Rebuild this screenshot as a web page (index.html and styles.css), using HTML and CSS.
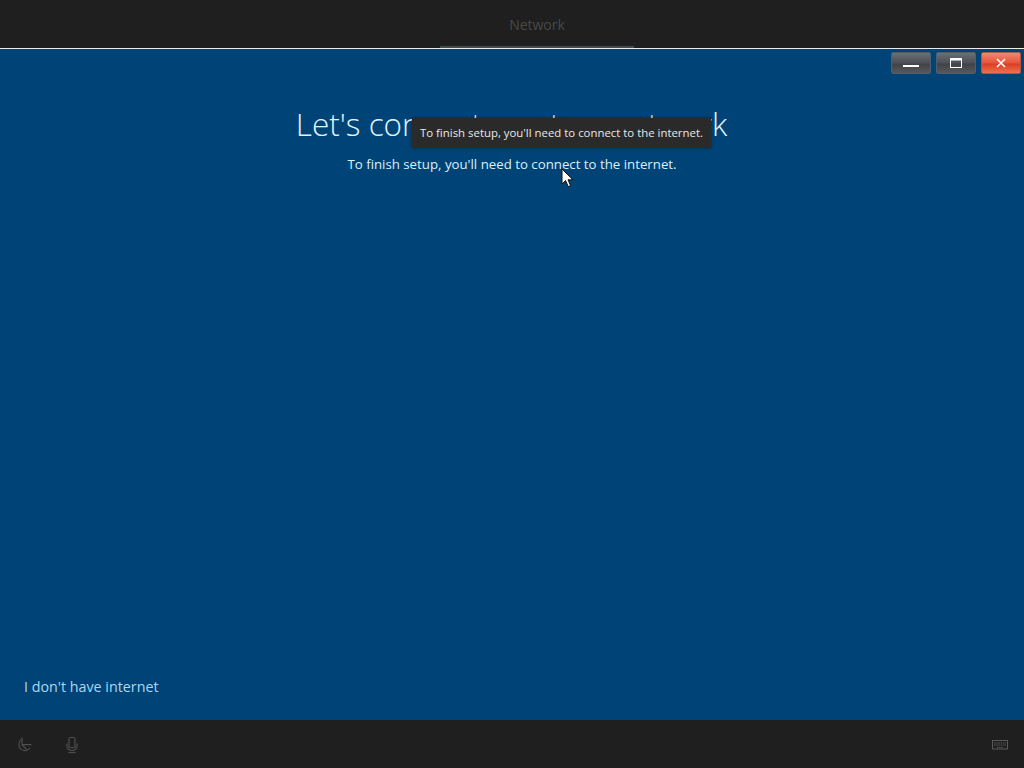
FILE: index.html
```html
<!DOCTYPE html>
<html lang="en">
<head>
<meta charset="utf-8">
<title>Network</title>
<link rel="stylesheet" href="styles.css">
</head>
<body>
<header class="topbar">
  <div class="step">
    <span class="step-label">Network</span>
    <span class="step-rule"></span>
  </div>
</header>
<main class="main">
  <div class="winctrls">
    <button class="wbtn"><svg width="16" height="10" viewBox="0 0 16 10"><rect x="0" y="7" width="16" height="2" fill="#fff"/></svg></button>
    <button class="wbtn"><svg width="12" height="10" viewBox="0 0 12 10"><rect x="0.5" y="0.5" width="11" height="9" fill="none" stroke="#fff"/><rect x="0" y="0" width="12" height="2.5" fill="#fff"/></svg></button>
    <button class="wbtn wclose"><svg width="10" height="10" viewBox="0 0 10 10"><path d="M1 1L9 9M9 1L1 9" stroke="#fff" stroke-width="1.6" fill="none"/></svg></button>
  </div>
  <h1 class="title">Let's connect you to a network</h1>
  <p class="subtitle">To finish setup, you'll need to connect to the internet.</p>
  <a class="skip">I don't have internet</a>
  <div class="tooltip">To finish setup, you'll need to connect to the internet.</div>
  <svg class="cursor" width="13" height="20" viewBox="0 0 13 20"><path d="M1 1V16L4.6 12.6L7.2 18.6L9.6 17.6L7 11.8H12Z" fill="#fff" stroke="#111" stroke-width="1"/></svg>
</main>
<footer class="bottombar">
  <div class="foot-left">
    <svg class="ficon" width="18" height="18" viewBox="0 0 18 18" fill="none" stroke="#4e4e4e" stroke-width="1.2"><path d="M5 3.6A6.2 6.2 0 1 0 14 12"/><path d="M6 1.5V8.6H15.5"/><path d="M6 8.6L10.5 13.5"/></svg>
    <svg class="ficon" width="18" height="18" viewBox="0 0 18 18" fill="none" stroke="#4e4e4e" stroke-width="1.2"><rect x="6" y="1.5" width="6" height="10" rx="1.5"/><path d="M4 7.5V10A5 4.5 0 0 0 14 10V7.5"/><path d="M5.5 16.5H12.5"/></svg>
  </div>
  <svg class="ficon" width="16" height="12" viewBox="0 0 16 12" fill="none" stroke="#585858"><rect x="0.5" y="1.5" width="15" height="8.5"/><path d="M2 4H14M2 6H14M5 8.5H11" stroke-dasharray="1.5 .7"/></svg>
</footer>
</body>
</html>
```
FILE: styles.css
```css
html, body {
  margin: 0;
  height: 100%;
}
body {
  display: flex;
  flex-direction: column;
  height: 768px;
  overflow: hidden;
  background: #004376;
  font-family: "Open Sans", "Liberation Sans", sans-serif;
}
.topbar {
  height: 48px;
  flex: none;
  background: #1f1f1f;
  border-bottom: 1px solid #e4eef2;
  display: flex;
  justify-content: center;
  box-sizing: content-box;
}
.step {
  width: 194px;
  margin-left: 50px;
  display: flex;
  flex-direction: column;
  align-items: center;
  justify-content: space-between;
}
.step-label {
  margin-top: 15px;
  font-size: 14px;
  line-height: 20px;
  color: #484848;
}
.step-rule {
  width: 100%;
  height: 2px;
  background: #454c50;
}
.main {
  position: relative;
  flex: 1;
  display: flex;
  flex-direction: column;
  align-items: center;
  background: #004376;
}
.winctrls {
  position: absolute;
  top: 3px;
  right: 3px;
  display: flex;
  gap: 5px;
}
.wbtn {
  width: 40px;
  height: 22px;
  padding: 0;
  display: flex;
  align-items: center;
  justify-content: center;
  border: 1px solid #4f5f70;
  border-radius: 2px;
  background: linear-gradient(#6a6f75, #4c4f54 50%, #414347 55%, #55585c);
}
.wclose {
  border-color: #a85a48;
  background: linear-gradient(#f08a70, #e8533a 50%, #d93f22 55%, #ee7050);
}
.title {
  margin: 53px 0 0 -1px;
  font-size: 31.5px;
  line-height: 44px;
  font-weight: 300;
  color: #e4f4fb;
  text-align: center;
}
.subtitle {
  margin: 8px 0 0;
  font-size: 13.25px;
  line-height: 20px;
  color: #dcf0f8;
  text-align: center;
}
.skip {
  margin-top: auto;
  margin-bottom: 23px;
  align-self: flex-start;
  margin-left: 24px;
  font-size: 14.3px;
  line-height: 20px;
  color: #a8d8f0;
}
.tooltip {
  position: absolute;
  left: 412px;
  top: 69px;
  width: 299px;
  height: 30px;
  box-sizing: border-box;
  background: #2a2a2a;
  color: #e8e8e8;
  font-size: 11.4px;
  line-height: 30px;
  text-align: center;
  white-space: nowrap;
  box-shadow: 0 0 3px rgba(0,0,0,.4);
}
.cursor {
  position: absolute;
  left: 561px;
  top: 119px;
}
.bottombar {
  height: 48px;
  flex: none;
  background: #1f1f1f;
  display: flex;
  align-items: center;
  justify-content: space-between;
  padding: 1px 16px 0;
  box-sizing: border-box;
}
.foot-left {
  display: flex;
  gap: 29px;
}
.ficon {
  display: block;
}
```
